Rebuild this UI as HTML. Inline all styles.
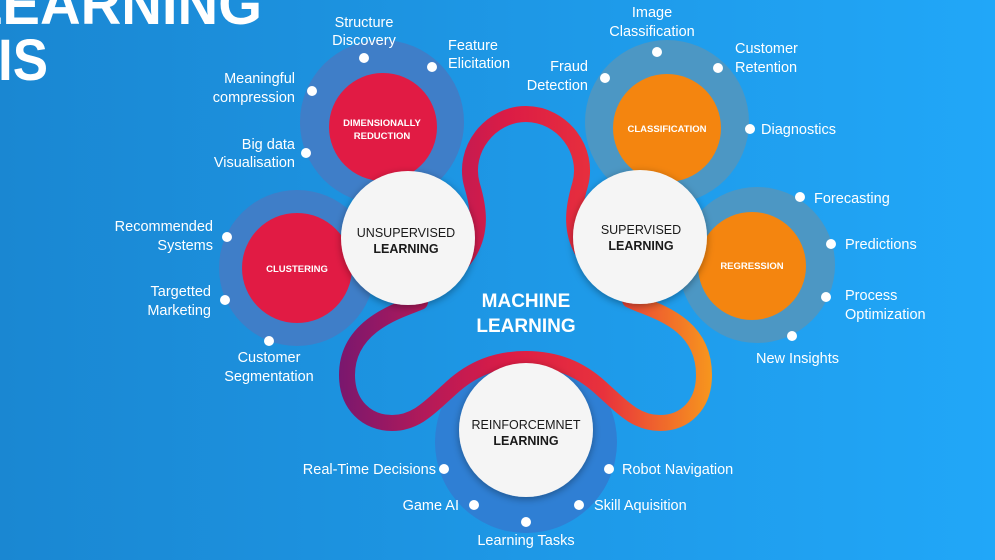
<!DOCTYPE html>
<html><head><meta charset="utf-8"><style>
html,body{margin:0;padding:0;width:995px;height:560px;overflow:hidden}
svg{display:block}
text{font-family:"Liberation Sans",sans-serif}
</style></head><body>
<svg width="995" height="560" viewBox="0 0 995 560" xmlns="http://www.w3.org/2000/svg">
<defs>
<linearGradient id="bg" x1="0" y1="0" x2="1" y2="0">
<stop offset="0" stop-color="#1a87d2"/><stop offset="1" stop-color="#21a7f8"/></linearGradient>
<linearGradient id="tube" gradientUnits="userSpaceOnUse" x1="340" y1="0" x2="716" y2="0">
<stop offset="0" stop-color="#7a176e"/><stop offset="0.25" stop-color="#b81a57"/>
<stop offset="0.45" stop-color="#dc1c45"/><stop offset="0.7" stop-color="#e8323c"/>
<stop offset="1" stop-color="#f79a1c"/></linearGradient>
<filter id="sh" x="-30%" y="-30%" width="160%" height="160%"><feDropShadow dx="0" dy="2" stdDeviation="4" flood-color="#000" flood-opacity="0.35"/></filter>
</defs>
<rect width="995" height="560" fill="url(#bg)"/>
<text x="-32" y="24" font-size="58" font-weight="bold" fill="#fff" textLength="294" lengthAdjust="spacingAndGlyphs">LEARNING</text>
<text x="-2" y="80" font-size="58" font-weight="bold" fill="#fff" textLength="50" lengthAdjust="spacingAndGlyphs">IS</text>

<circle cx="382" cy="122" r="82" fill="#3f7ec8"/>
<circle cx="297" cy="268" r="78" fill="#3f7ec8"/>
<circle cx="667" cy="122" r="82" fill="#4c97c4"/>
<circle cx="757" cy="265" r="78" fill="#4c97c4"/>
<circle cx="526" cy="442" r="91" fill="#2f7fd4"/>

<path d="M462,262 C485,235 478,205 472,185 C462,150 490,114 526,114 C562,114 590,150 580,185 C574,205 567,235 590,262
 M630,300 C650,310 704,320 704,375 C704,405 685,423 660,423 C635,423 620,405 603,390 C580,368 555,359 526,359
 C497,359 472,368 449,390 C432,405 417,423 392,423 C367,423 347,405 347,375 C347,325 400,310 420,302"
 fill="none" stroke="url(#tube)" stroke-width="16" stroke-linecap="round"/>

<circle cx="383" cy="127" r="54" fill="#e11b44"/>
<circle cx="297" cy="268" r="55" fill="#e11b44"/>
<circle cx="667" cy="128" r="54" fill="#f4850f"/>
<circle cx="752" cy="266" r="54" fill="#f4850f"/>
<g font-size="9.5" font-weight="bold" fill="#fff" text-anchor="middle">
<text x="382" y="126">DIMENSIONALLY</text><text x="382" y="139">REDUCTION</text>
<text x="297" y="272">CLUSTERING</text>
<text x="667" y="132">CLASSIFICATION</text>
<text x="752" y="269">REGRESSION</text>
</g>

<circle cx="408" cy="238" r="67" fill="#f5f5f5" filter="url(#sh)"/>
<circle cx="640" cy="237" r="67" fill="#f5f5f5" filter="url(#sh)"/>
<circle cx="526" cy="430" r="67" fill="#f5f5f5" filter="url(#sh)"/>
<g font-size="12.5" fill="#1a1a1a" text-anchor="middle">
<text x="406" y="237">UNSUPERVISED</text><text x="406" y="253" font-weight="bold">LEARNING</text>
<text x="641" y="234">SUPERVISED</text><text x="641" y="250" font-weight="bold">LEARNING</text>
<text x="526" y="429">REINFORCEMNET</text><text x="526" y="445" font-weight="bold">LEARNING</text>
</g>
<g font-size="19" font-weight="bold" fill="#fff" text-anchor="middle">
<text x="526" y="307">MACHINE</text><text x="526" y="332">LEARNING</text>
</g>

<g fill="#fff">
<circle cx="364" cy="58" r="5"/><circle cx="432" cy="67" r="5"/><circle cx="312" cy="91" r="5"/>
<circle cx="306" cy="153" r="5"/><circle cx="227" cy="237" r="5"/><circle cx="225" cy="300" r="5"/>
<circle cx="269" cy="341" r="5"/><circle cx="657" cy="52" r="5"/><circle cx="605" cy="78" r="5"/>
<circle cx="718" cy="68" r="5"/><circle cx="750" cy="129" r="5"/><circle cx="800" cy="197" r="5"/>
<circle cx="831" cy="244" r="5"/><circle cx="826" cy="297" r="5"/><circle cx="792" cy="336" r="5"/>
<circle cx="444" cy="469" r="5"/><circle cx="609" cy="469" r="5"/><circle cx="474" cy="505" r="5"/>
<circle cx="579" cy="505" r="5"/><circle cx="526" cy="522" r="5"/>
</g>

<g font-size="14.5" fill="#fff">
<g text-anchor="middle">
<text x="364" y="27">Structure</text><text x="364" y="45">Discovery</text>
<text x="269" y="362">Customer</text><text x="269" y="381">Segmentation</text>
<text x="652" y="17">Image</text><text x="652" y="36">Classification</text>
<text x="526" y="545">Learning Tasks</text>
</g>
<g text-anchor="end">
<text x="295" y="83">Meaningful</text><text x="295" y="102">compression</text>
<text x="295" y="149">Big data</text><text x="295" y="167">Visualisation</text>
<text x="213" y="231">Recommended</text><text x="213" y="250">Systems</text>
<text x="211" y="296">Targetted</text><text x="211" y="315">Marketing</text>
<text x="588" y="71">Fraud</text><text x="588" y="90">Detection</text>
<text x="436" y="474">Real-Time Decisions</text>
<text x="459" y="510">Game AI</text>
</g>
<text x="448" y="50">Feature</text><text x="448" y="68">Elicitation</text>
<text x="735" y="53">Customer</text><text x="735" y="72">Retention</text>
<text x="761" y="134">Diagnostics</text>
<text x="814" y="203">Forecasting</text>
<text x="845" y="249">Predictions</text>
<text x="845" y="300">Process</text><text x="845" y="319">Optimization</text>
<text x="756" y="363">New Insights</text>
<text x="622" y="474">Robot Navigation</text>
<text x="594" y="510">Skill Aquisition</text>
</g>
</svg>
</body></html>
